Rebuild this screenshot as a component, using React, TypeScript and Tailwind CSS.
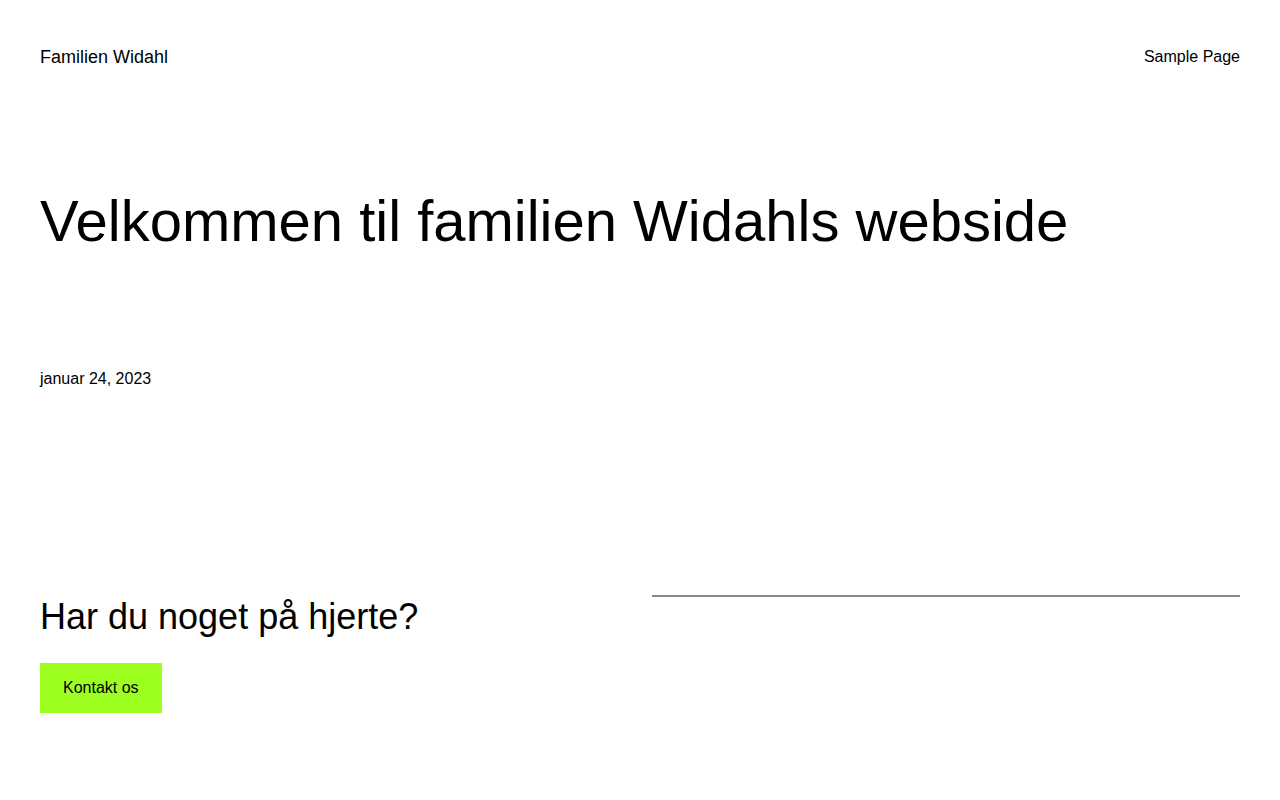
export default function App() {
  return (
    <div className="min-h-screen bg-white text-black font-['Liberation_Sans',Arial,sans-serif]">
      <header className="flex items-center justify-between px-10 pt-[45px]">
        <a className="text-[18px] leading-[24px]">Familien Widahl</a>
        <nav className="text-[16px] leading-[24px]">Sample Page</nav>
      </header>

      <main className="px-10">
        <h1 className="mt-[120px] text-[58px] leading-[64px] font-normal">
          Velkommen til familien Widahls webside
        </h1>
        <p className="mt-[114px] text-[16px] leading-[24px]">januar 24, 2023</p>
      </main>

      <footer className="mt-[203px] px-10 flex gap-10">
        <div className="w-[572px]">
          <h2 className="text-[36px] leading-[46px] font-normal">Har du noget på hjerte?</h2>
          <button className="mt-[23px] bg-[#9dff20] px-[23px] h-[50px] text-[16px]">
            Kontakt os
          </button>
        </div>
        <div className="flex-1 pt-[1px]">
          <hr className="border-0 h-[2px] bg-[#888888]" />
        </div>
      </footer>
    </div>
  );
}
